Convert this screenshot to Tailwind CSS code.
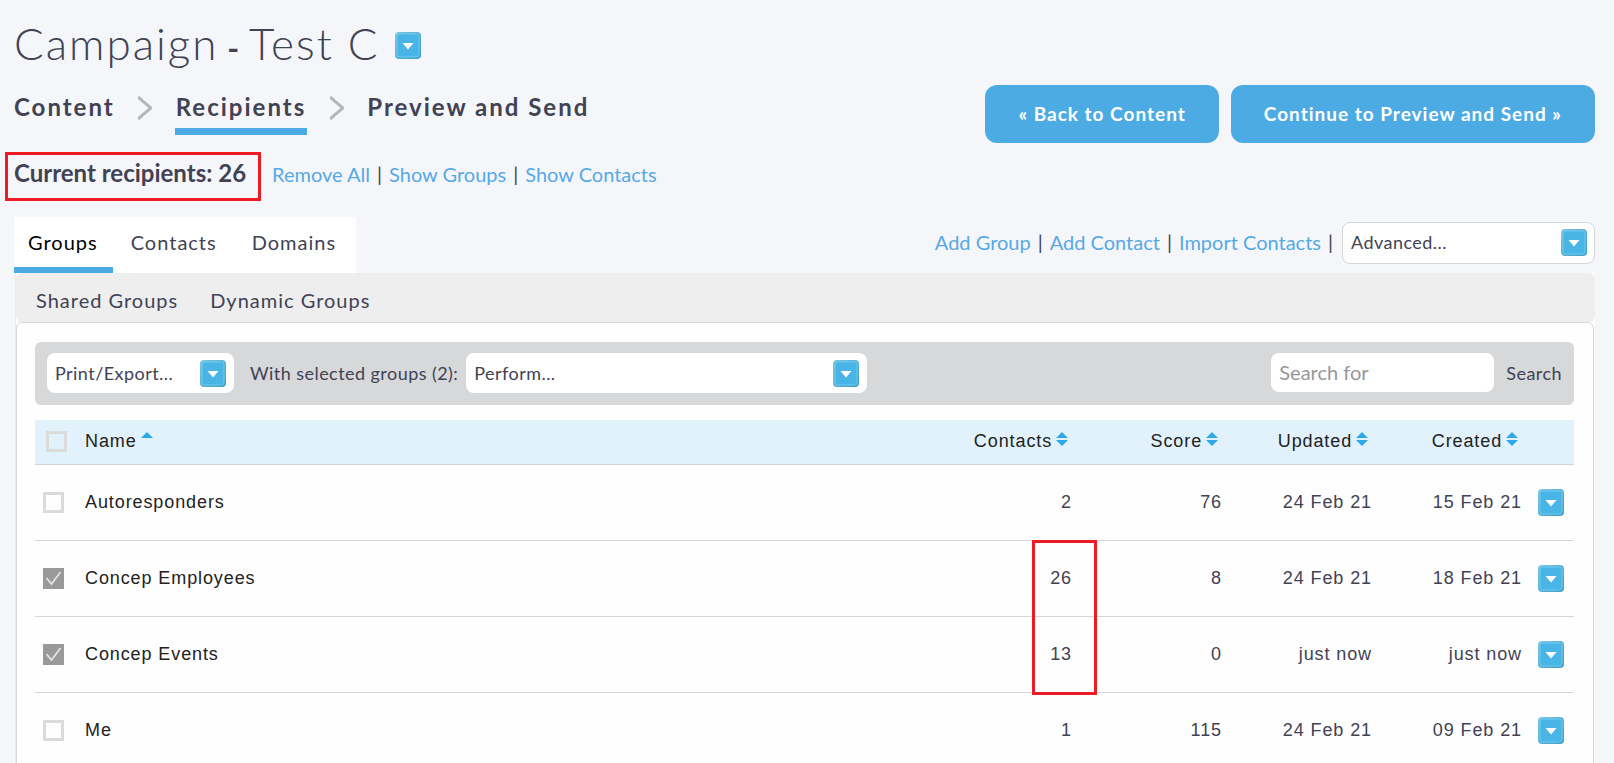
<!DOCTYPE html>
<html lang="en">

<head>
    <meta charset="utf-8" />
    <meta content="width=device-width, initial-scale=1" name="viewport" />
    <title>Campaign - Test C</title>
    <script src="https://cdn.jsdelivr.net/npm/@tailwindcss/browser@4"></script>
</head>

<body class="bg-[#f5f6fa] text-[#414254] font-[Lato,sans-serif] min-h-screen">
    <!-- Shared icons -->
    <svg class="absolute size-0">
        <defs>
            <linearGradient id="edge" x1="0" y1="0" x2="1" y2="1">
                <stop offset="0" stop-color="#7cc6e4" />
                <stop offset="1" stop-color="#3b9dc6" />
            </linearGradient>
        </defs>
        <symbol id="drop" viewBox="0 0 26 27">
            <rect width="26" height="27" rx="4" fill="url(#edge)" />
            <rect x="2" y="2" width="22" height="23" rx="2.5" fill="#49b5e6" stroke="#6fcaf0" />
            <path d="M7.5 11h11L13 17.5z" fill="#fff" />
        </symbol>
        <symbol id="chevron" viewBox="0 0 14 24">
            <path d="M0 1l13 11L0 23" fill="none" stroke="#b5b6b9" stroke-width="3" />
        </symbol>
        <symbol id="sort" viewBox="0 0 12 14">
            <path d="M6 0l6 6H0zM0 8h12l-6 6z" fill="#2ea9e8" />
        </symbol>
        <symbol id="sort-up" viewBox="0 0 12 14">
            <path d="M6 0l6 6H0z" fill="#2ea9e8" />
        </symbol>
        <symbol id="tick" viewBox="0 0 21 21">
            <path d="M3.5 10l5 6 9-12" fill="none" stroke="#e2e2e2" stroke-width="1.8" />
        </symbol>
    </svg>

    <!-- Header -->
    <header class="pl-3.5 pr-[19px]">
        <div class="flex items-center gap-4 pt-3.5 h-[76px]">
            <h1 class="text-[44px] leading-[60px] font-light tracking-[2px]">Campaign<b class="font-bold text-[32px] tracking-[1px]"> - </b>Test C</h1>
            <button aria-label="Campaign options"><svg class="w-[26px] h-[27px]"><use href="#drop" /></svg></button>
        </div>
        <div class="flex items-start justify-between pt-[9px] h-[67px]">
            <nav class="flex items-start text-[24px] leading-[43px] font-bold tracking-[2px]">
                <a href="#content" class="h-[50px]">Content</a>
                <svg class="w-3.5 h-6 mt-[11px] mx-[23px]"><use href="#chevron" /></svg>
                <a href="#recipients" class="h-[50px] px-px border-b-[7px] border-[#4dabe4]">Recipients</a>
                <svg class="w-3.5 h-6 mt-[11px] mx-[23px]"><use href="#chevron" /></svg>
                <a href="#preview" class="h-[50px]">Preview and Send</a>
            </nav>
            <div class="flex gap-3 text-white text-[19px] font-bold tracking-[1px]">
                <button class="bg-[#4dabe4] rounded-xl h-[58px] px-[33px]">« Back to Content</button>
                <button class="bg-[#4dabe4] rounded-xl h-[58px] px-[33px]">Continue to Preview and Send »</button>
            </div>
        </div>
        <div class="flex items-start gap-[11px] h-[49px] mt-[9px] -ml-[9px]">
            <h2 class="h-[49px] border-[3px] border-[#ed1c24] px-1.5 pr-3 text-[24px] leading-[36px] font-bold">Current recipients: 26</h2>
            <div class="flex gap-[7px] text-[20px] leading-[44px]">
                <a href="#remove" class="text-[#55a9e6]">Remove All</a><span>|</span>
                <a href="#show-groups" class="text-[#55a9e6]">Show Groups</a><span>|</span>
                <a href="#show-contacts" class="text-[#55a9e6]">Show Contacts</a>
            </div>
        </div>
    </header>

    <!-- Tabs -->
    <div class="flex justify-between items-start pl-3.5 pr-[19px] pt-4">
        <nav class="flex bg-white text-[20px] leading-[50px] tracking-[1px] h-14">
            <a href="#groups" class="text-black pl-3.5 pr-[15px] border-b-[6px] border-[#4dabe4]">Groups</a>
            <a href="#contacts" class="px-[18px]">Contacts</a>
            <a href="#domains" class="pl-[17px] pr-5">Domains</a>
        </nav>
        <div class="flex items-start gap-[7px] text-[20px] leading-[40px] pt-[5px]">
            <a href="#add-group" class="text-[#55a9e6]">Add Group</a><span>|</span>
            <a href="#add-contact" class="text-[#55a9e6]">Add Contact</a><span>|</span>
            <a href="#import" class="text-[#55a9e6]">Import Contacts</a><span>|</span>
            <div class="relative ml-0.5">
                <select aria-label="Advanced" class="block appearance-none w-[253px] h-[42px] pl-2 pb-0.5 bg-white border border-[#d5d6d9] rounded-lg text-[18px] leading-6 tracking-wide">
                    <option>Advanced...</option>
                </select>
                <svg class="absolute right-2 top-[7px] w-[26px] h-[27px] pointer-events-none"><use href="#drop" /></svg>
            </div>
        </div>
    </div>

    <!-- Groups panel -->
    <main class="ml-[15px] mr-[19px] bg-white border-l border-[#e8e9ec]">
        <nav class="flex gap-8 h-[49px] pl-5 bg-[#eee] rounded-md text-[20px] leading-[54px] tracking-[1px]">
            <a href="#shared">Shared Groups</a>
            <a href="#dynamic">Dynamic Groups</a>
        </nav>
        <section class="mr-px border border-[#d5d6d8] rounded-md pl-[18px] pr-[19px] pt-[19px] pb-5 bg-[#fefefe]">
            <div class="flex items-start h-[63px] pt-[11px] pl-3 pr-3 bg-[#d7d8da] rounded-md text-[18px] leading-10 tracking-wide">
                <div class="relative">
                    <select aria-label="Print or export" class="block appearance-none w-[187px] h-10 pl-2 bg-white rounded-lg">
                        <option>Print/Export...</option>
                    </select>
                    <svg class="absolute right-2 top-[7px] w-[26px] h-[27px] pointer-events-none"><use href="#drop" /></svg>
                </div>
                <label for="perform" class="pl-4 pr-2">With selected groups (2):</label>
                <div class="relative">
                    <select id="perform" class="block appearance-none w-[401px] h-10 pl-2 bg-white rounded-lg">
                        <option>Perform...</option>
                    </select>
                    <svg class="absolute right-2 top-[7px] w-[26px] h-[27px] pointer-events-none"><use href="#drop" /></svg>
                </div>
                <input type="text" aria-label="Search for" placeholder="Search for" class="ml-auto w-[223px] h-[39px] px-2 pb-0.5 bg-white rounded-lg text-[20px] tracking-normal placeholder:text-[#96979a]" />
                <button class="ml-3">Search</button>
            </div>

            <div class="relative mt-[15px]">
                <table class="w-full table-fixed border-separate border-spacing-0 font-['Liberation_Sans',Arial,sans-serif] text-[18px] tracking-wider text-right [&_td]:h-[76px] [&_td]:border-b [&_td]:border-[#d5d6d8] [&_td]:pr-1.5 [&_th]:h-[45px] [&_th]:border-b [&_th]:border-[#cfd3d6] [&_th]:bg-[#e1f2fd] [&_th]:pr-2.5 [&_th]:pb-0.5 [&_th]:font-normal [&_th]:text-[#222]">
                    <thead>
                        <tr>
                            <th class="w-[50px] text-left"><input type="checkbox" aria-label="Select all" class="block appearance-none ml-[11px] size-[21px] border-3 border-[#dadbdb]" /></th>
                            <th class="text-left">Name <svg class="inline -ml-0.5 w-3 h-3.5 align-[1px]"><use href="#sort-up" /></svg></th>
                            <th class="w-[150px]">Contacts <svg class="inline -ml-0.5 w-3 h-3.5 align-[1px]"><use href="#sort" /></svg></th>
                            <th class="w-[150px]">Score <svg class="inline -ml-0.5 w-3 h-3.5 align-[1px]"><use href="#sort" /></svg></th>
                            <th class="w-[150px]">Updated <svg class="inline -ml-0.5 w-3 h-3.5 align-[1px]"><use href="#sort" /></svg></th>
                            <th class="w-[150px]">Created <svg class="inline -ml-0.5 w-3 h-3.5 align-[1px]"><use href="#sort" /></svg></th>
                            <th class="w-[46px]"></th>
                        </tr>
                    </thead>
                    <tbody>
                        <tr>
                            <td><input type="checkbox" id="g1" class="block appearance-none ml-2 size-[21px] border-3 border-[#dadbdb]" /></td>
                            <td class="text-left text-[#222]"><label for="g1">Autoresponders</label></td>
                            <td>2</td>
                            <td>76</td>
                            <td>24 Feb 21</td>
                            <td>15 Feb 21</td>
                            <td><button aria-label="Autoresponders options" class="block ml-auto mr-1"><svg class="w-[26px] h-[27px]"><use href="#drop" /></svg></button></td>
                        </tr>
                        <tr>
                            <td>
                                <div class="relative ml-2 size-[21px]">
                                    <input type="checkbox" id="g2" checked class="block appearance-none size-[21px] border-3 border-[#dadbdb] checked:bg-[#999] checked:border-[#999]" />
                                    <svg class="absolute inset-0 size-[21px] pointer-events-none"><use href="#tick" /></svg>
                                </div>
                            </td>
                            <td class="text-left text-[#222]"><label for="g2">Concep Employees</label></td>
                            <td>26</td>
                            <td>8</td>
                            <td>24 Feb 21</td>
                            <td>18 Feb 21</td>
                            <td><button aria-label="Concep Employees options" class="block ml-auto mr-1"><svg class="w-[26px] h-[27px]"><use href="#drop" /></svg></button></td>
                        </tr>
                        <tr>
                            <td>
                                <div class="relative ml-2 size-[21px]">
                                    <input type="checkbox" id="g3" checked class="block appearance-none size-[21px] border-3 border-[#dadbdb] checked:bg-[#999] checked:border-[#999]" />
                                    <svg class="absolute inset-0 size-[21px] pointer-events-none"><use href="#tick" /></svg>
                                </div>
                            </td>
                            <td class="text-left text-[#222]"><label for="g3">Concep Events</label></td>
                            <td>13</td>
                            <td>0</td>
                            <td>just now</td>
                            <td>just now</td>
                            <td><button aria-label="Concep Events options" class="block ml-auto mr-1"><svg class="w-[26px] h-[27px]"><use href="#drop" /></svg></button></td>
                        </tr>
                        <tr>
                            <td><input type="checkbox" id="g4" class="block appearance-none ml-2 size-[21px] border-3 border-[#dadbdb]" /></td>
                            <td class="text-left text-[#222]"><label for="g4">Me</label></td>
                            <td>1</td>
                            <td>115</td>
                            <td>24 Feb 21</td>
                            <td>09 Feb 21</td>
                            <td><button aria-label="Me options" class="block ml-auto mr-1"><svg class="w-[26px] h-[27px]"><use href="#drop" /></svg></button></td>
                        </tr>
                    </tbody>
                </table>
                <!-- Highlight round the selected counts -->
                <div class="absolute top-[120px] right-[477px] w-[65px] h-[155px] border-3 border-[#ed1c24] pointer-events-none"></div>
            </div>
        </section>
    </main>
</body>

</html>
